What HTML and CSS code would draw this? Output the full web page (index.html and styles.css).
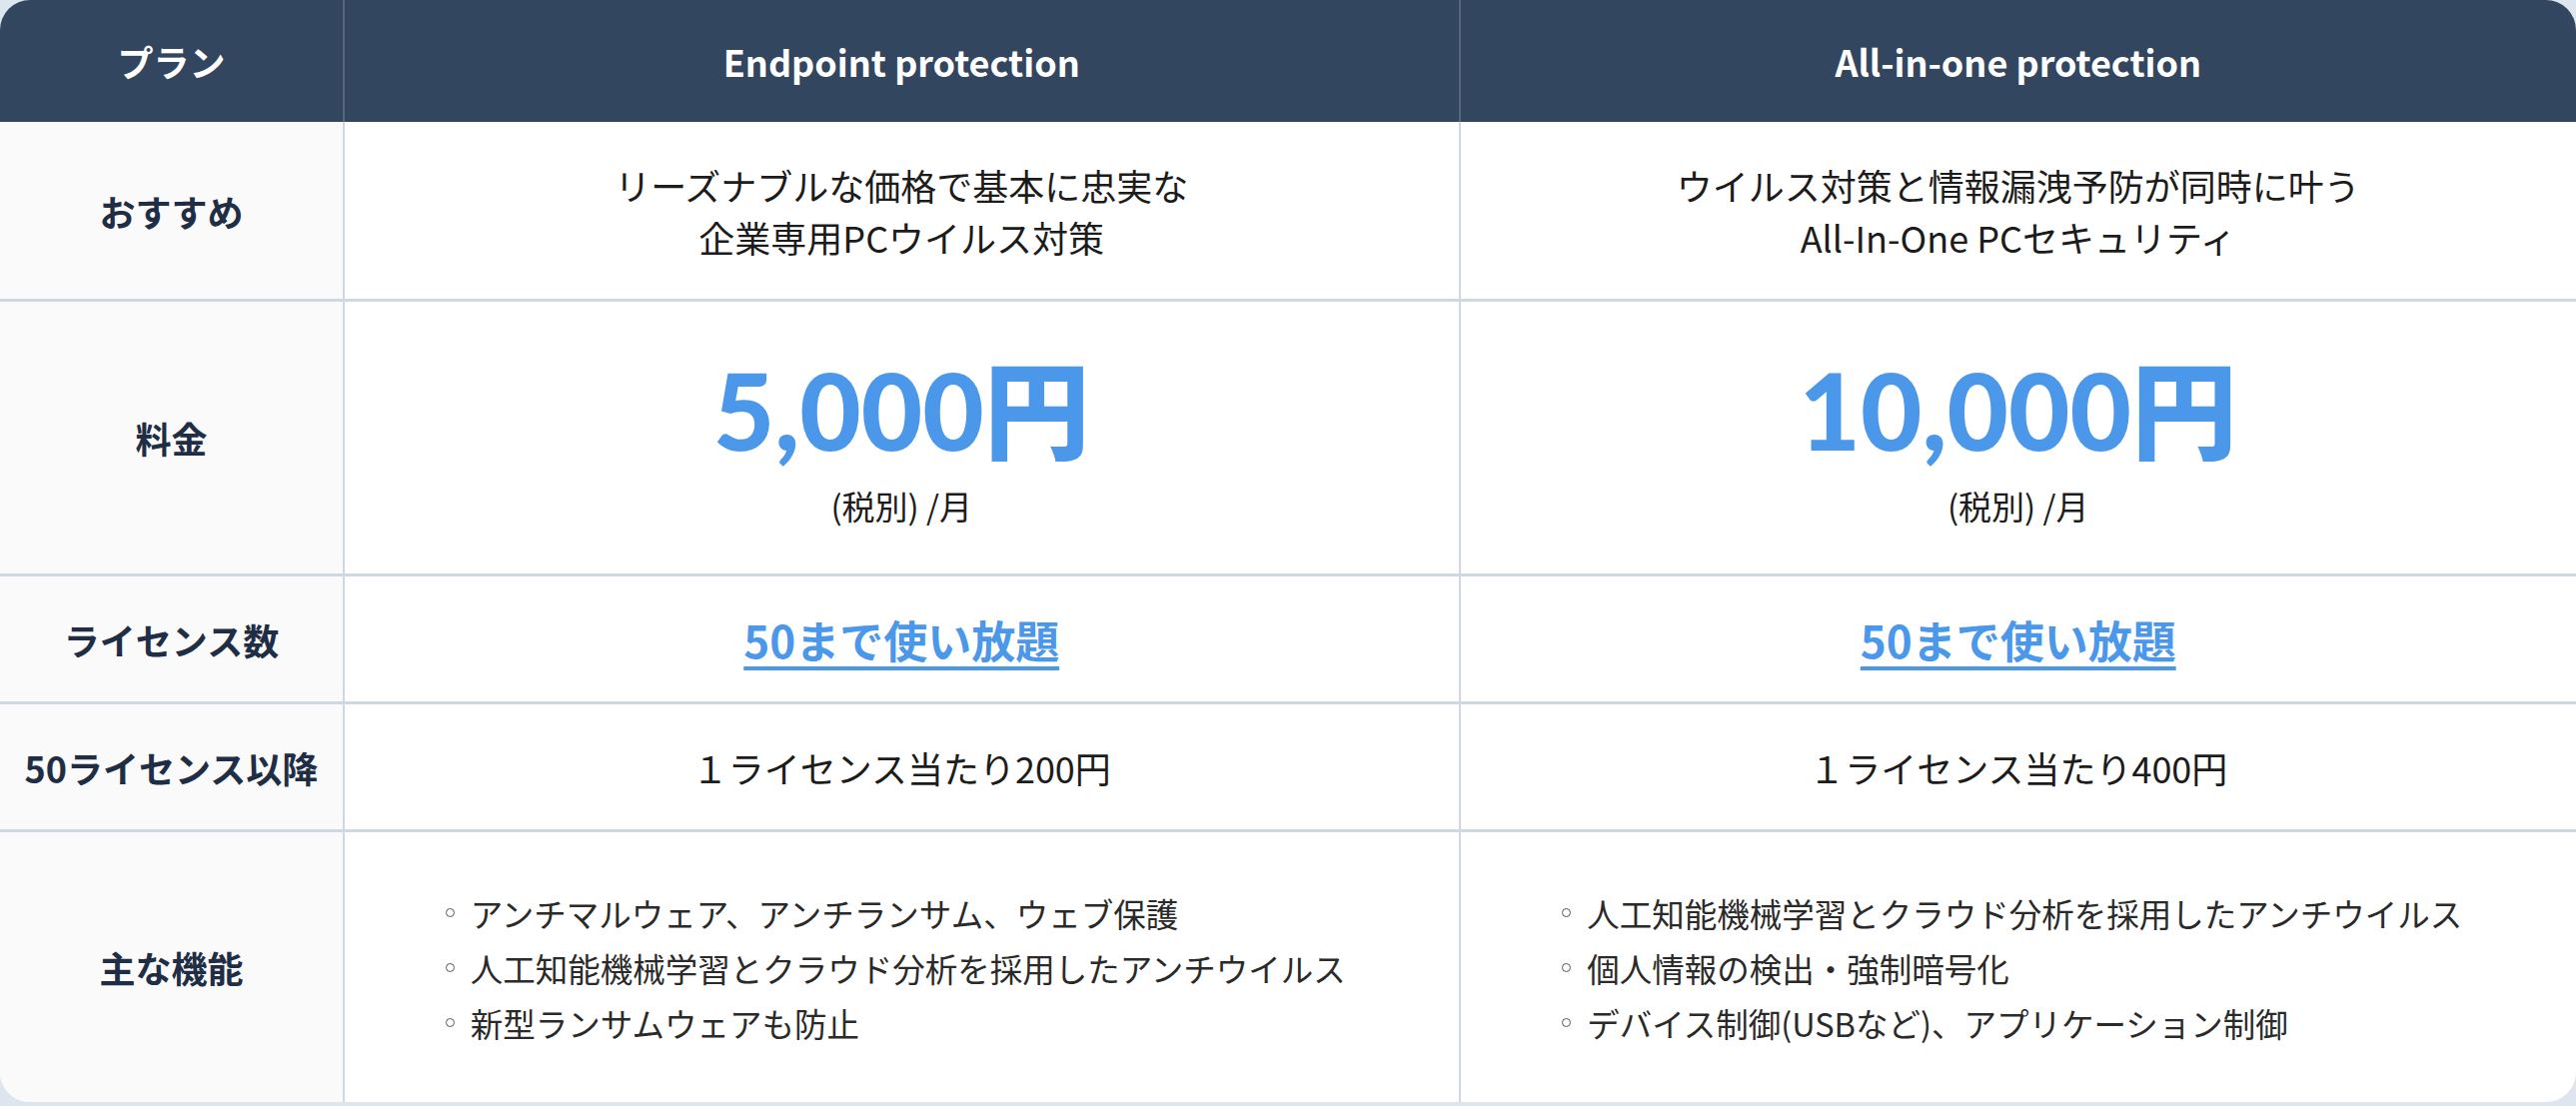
FILE: index.html
```html
<!DOCTYPE html>
<html lang="ja">
<head>
<meta charset="utf-8">
<title>プラン比較</title>
<link rel="stylesheet" href="styles.css">
</head>
<body>
<div class="card">
  <div class="row head">
    <div class="cell label">プラン</div>
    <div class="cell">Endpoint protection</div>
    <div class="cell last">All-in-one protection</div>
  </div>
  <div class="row r1">
    <div class="cell label">おすすめ</div>
    <div class="cell"><p class="desc">リーズナブルな価格で基本に忠実な<br>企業専用PCウイルス対策</p></div>
    <div class="cell last"><p class="desc">ウイルス対策と情報漏洩予防が同時に叶う<br>All-In-One PCセキュリティ</p></div>
  </div>
  <div class="row r2">
    <div class="cell label">料金</div>
    <div class="cell"><div class="price">5,000円</div><div class="sub">(税別) /月</div></div>
    <div class="cell last"><div class="price">10,000円</div><div class="sub">(税別) /月</div></div>
  </div>
  <div class="row r3">
    <div class="cell label">ライセンス数</div>
    <div class="cell"><a class="link" href="#">50まで使い放題</a></div>
    <div class="cell last"><a class="link" href="#">50まで使い放題</a></div>
  </div>
  <div class="row r4">
    <div class="cell label">50ライセンス以降</div>
    <div class="cell"><p class="desc">１ライセンス当たり200円</p></div>
    <div class="cell last"><p class="desc">１ライセンス当たり400円</p></div>
  </div>
  <div class="row r5">
    <div class="cell label">主な機能</div>
    <div class="cell">
      <ul class="features">
        <li>アンチマルウェア、アンチランサム、ウェブ保護</li>
        <li>人工知能機械学習とクラウド分析を採用したアンチウイルス</li>
        <li>新型ランサムウェアも防止</li>
      </ul>
    </div>
    <div class="cell last">
      <ul class="features">
        <li>人工知能機械学習とクラウド分析を採用したアンチウイルス</li>
        <li>個人情報の検出・強制暗号化</li>
        <li>デバイス制御(USBなど)、アプリケーション制御</li>
      </ul>
    </div>
  </div>
</div>
</body>
</html>
```
FILE: styles.css
```css
html, body {
  margin: 0;
  padding: 0;
}
body {
  background: #dde6ef;
  font-family: "Noto Sans CJK JP", "Noto Sans", sans-serif;
  color: #222;
  height: 1107px;
  overflow: hidden;
}
.card {
  width: 2578px;
  height: 1103px;
  background: #fff;
  border-radius: 30px;
  overflow: hidden;
  display: grid;
  grid-template-rows: 122px 180px 275px 128px 128px 270px;
}
.row {
  display: grid;
  grid-template-columns: 345px 1fr 1fr;
  border-bottom: 3px solid #cfd8e2;
}
.row.head {
  background: #33465f;
  border-bottom: none;
}
.row.r5 {
  border-bottom: none;
}
.cell {
  display: flex;
  flex-direction: column;
  align-items: center;
  justify-content: center;
  text-align: center;
  border-right: 2px solid #cfd8e2;
  font-size: 36px;
  min-width: 0;
}
.cell.last {
  border-right: none;
}
.head .cell {
  color: #fff;
  font-weight: 700;
  font-size: 36px;
  border-right-color: #56677d;
}
.head .cell.last {
  border-right: none;
}
.cell.label {
  background: #fafafa;
  font-weight: 700;
  color: #1f2e44;
}
.head .cell.label {
  background: transparent;
  color: #fff;
}
.desc {
  margin: 0;
  font-size: 36px;
  line-height: 52px;
  color: #1c1c1c;
}
.price {
  font-family: "Lato", "Noto Sans CJK JP", sans-serif;
  font-weight: 900;
  font-size: 106px;
  line-height: 118px;
  color: #4b97ea;
  margin-top: 4px;
}
.sub {
  font-size: 33px;
  line-height: 46px;
  color: #1c1c1c;
  margin-top: 14px;
}
.link {
  font-size: 44px;
  font-weight: 700;
  color: #4b97ea;
  text-decoration: underline;
  text-decoration-thickness: 4px;
  text-underline-offset: 8px;
}
.features {
  list-style: none;
  margin: 0 0 0 -12px;
  padding: 0;
  text-align: left;
  font-size: 32.5px;
  line-height: 55px;
  color: #2a2a2a;
}
.features li {
  display: flex;
  align-items: center;
  gap: 16px;
}
.features li::before {
  content: "";
  width: 7px;
  height: 7px;
  border: 1.5px solid #555;
  border-radius: 50%;
  flex: none;
}
```
